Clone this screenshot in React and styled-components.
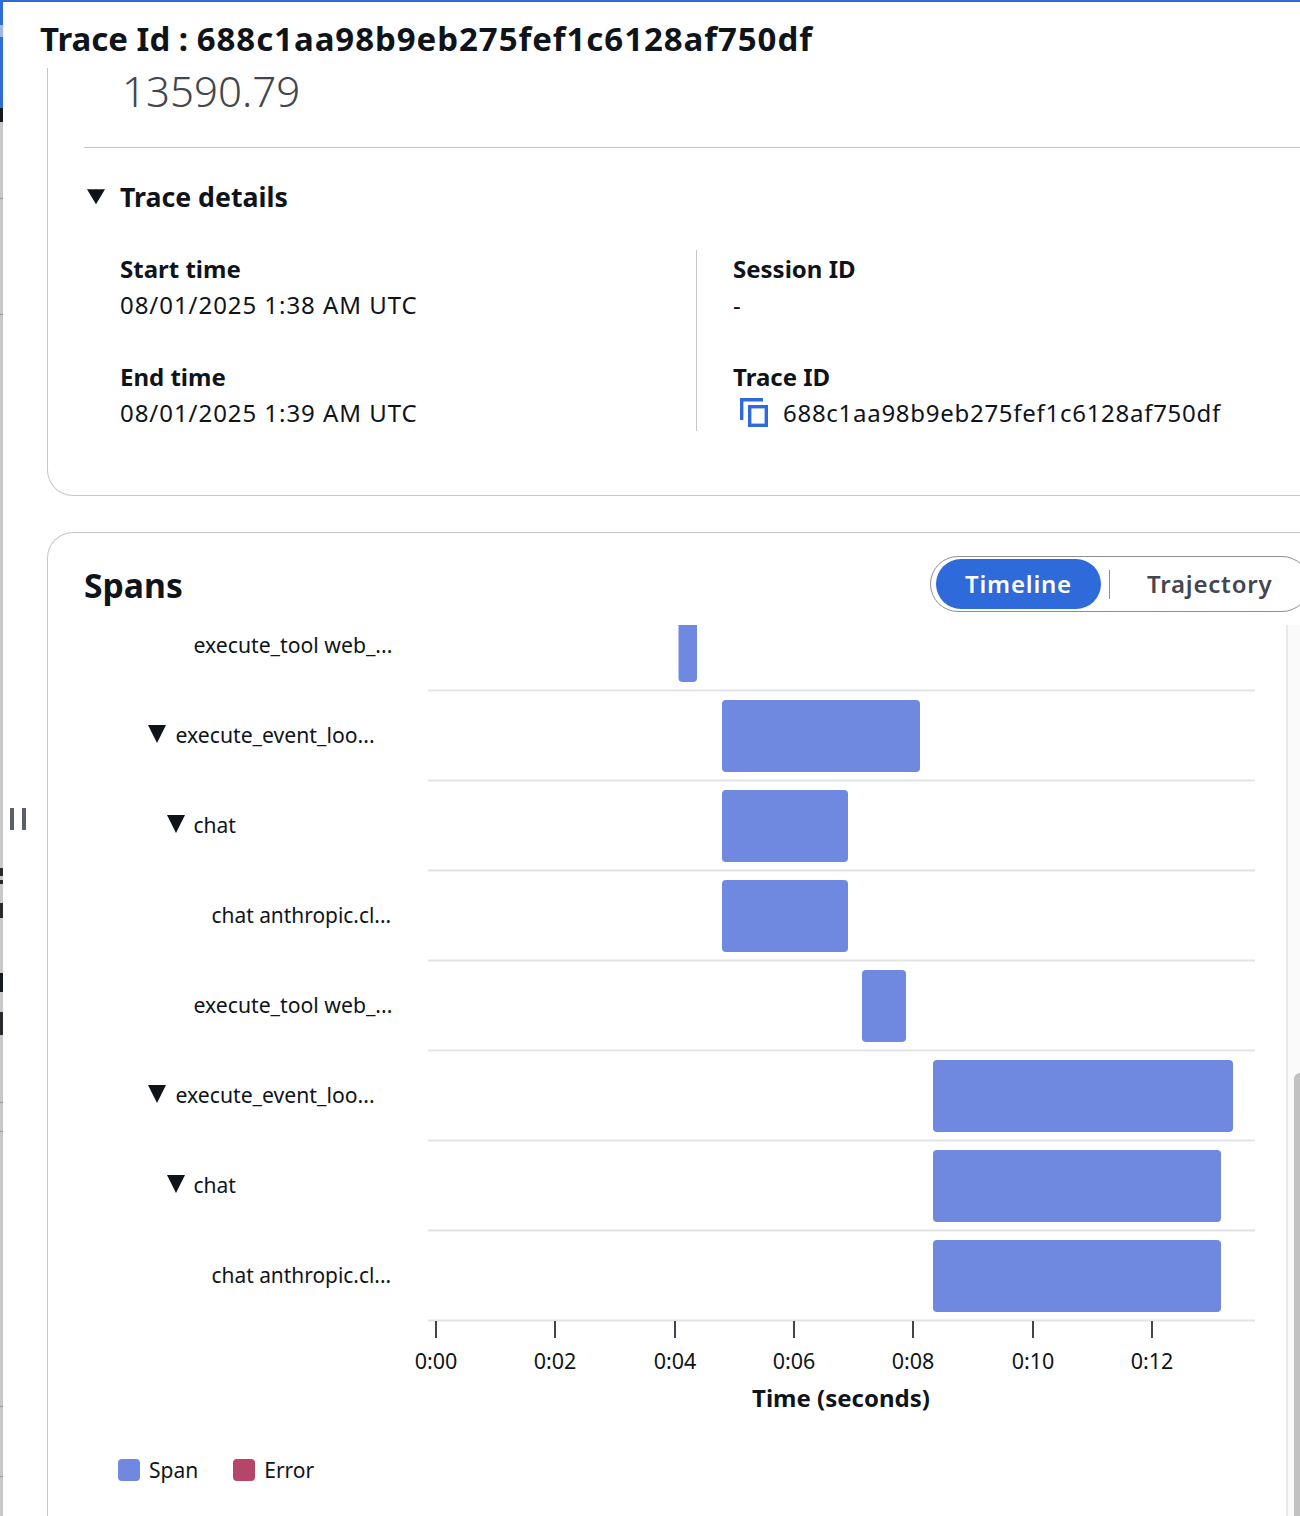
import React from 'react';
import styled, { createGlobalStyle } from 'styled-components';

const GlobalStyle = createGlobalStyle`
  html, body {
    margin: 0;
    padding: 0;
    background: #fff;
  }
  body {
    font-family: "Noto Sans", "Open Sans", sans-serif;
    color: #0f141a;
  }
`;

const ROW_LINES = [690.5, 780.5, 870.5, 960.5, 1050.5, 1140.5, 1230.5, 1320.5];

const BARS = [
  { x: 678.5, y: 600, w: 18.5, h: 82 },
  { x: 722, y: 700, w: 198, h: 72 },
  { x: 722, y: 790, w: 126, h: 72 },
  { x: 722, y: 880, w: 126, h: 72 },
  { x: 862, y: 970, w: 44, h: 72 },
  { x: 933, y: 1060, w: 300, h: 72 },
  { x: 933, y: 1150, w: 288, h: 72 },
  { x: 933, y: 1240, w: 288, h: 72 },
];

const LABELS = [
  { x: 193.5, y: 645, size: 21.2, text: 'execute_tool web_...' },
  { x: 175.5, y: 735, size: 21.2, text: 'execute_event_loo...', caret: 148 },
  { x: 193.5, y: 825, size: 21, text: 'chat', caret: 167 },
  { x: 211.5, y: 915, size: 20.9, text: 'chat anthropic.cl...' },
  { x: 193.5, y: 1005, size: 21.2, text: 'execute_tool web_...' },
  { x: 175.5, y: 1095, size: 21.2, text: 'execute_event_loo...', caret: 148 },
  { x: 193.5, y: 1185, size: 21, text: 'chat', caret: 167 },
  { x: 211.5, y: 1275, size: 20.9, text: 'chat anthropic.cl...' },
];

const TICKS = [
  { x: 436, label: '0:00' },
  { x: 555, label: '0:02' },
  { x: 675, label: '0:04' },
  { x: 794, label: '0:06' },
  { x: 913, label: '0:08' },
  { x: 1033, label: '0:10' },
  { x: 1152, label: '0:12' },
];

// slivers of the page behind the drawer that show in the 3px strip on the left
const EDGE_MARKS = [
  { top: 25, height: 12, color: '#9db8e8' },
  { top: 198, height: 1, color: '#9a9a9a' },
  { top: 314, height: 1, color: '#9a9a9a' },
  { top: 868, height: 8, color: '#2a2a2e' },
  { top: 880, height: 4, color: '#2a2a2e' },
  { top: 903, height: 15, color: '#2a2a2e' },
  { top: 973, height: 19, color: '#16191f' },
  { top: 1012, height: 23, color: '#2a2a2e' },
  { top: 1102, height: 1, color: '#9a9a9a' },
  { top: 1131, height: 1, color: '#9a9a9a' },
  { top: 1406, height: 1, color: '#9a9a9a' },
  { top: 1476, height: 1, color: '#9a9a9a' },
];

const Caret = ({ size = 18 }) => (
  <svg width={size} height={size * 0.85} viewBox="0 0 18 15">
    <path d="M0 0h18L9 15z" fill="#0f141a" />
  </svg>
);

const CopyIcon = () => (
  <svg width="29" height="30" viewBox="0 0 29 30" fill="none" stroke="#2e6ad9" strokeWidth="3.4">
    <path d="M1.7 22V1.7H23" />
    <rect x="9.7" y="8.7" width="16.6" height="18.6" />
  </svg>
);

const SpanChart = () => (
  <ChartSvg viewBox="48 625 1238 810">
    {ROW_LINES.map((y) => (
      <line key={y} x1="428" x2="1255" y1={y} y2={y} stroke="#e3e3e6" strokeWidth="2" />
    ))}
    {BARS.map((b) => (
      <rect key={b.y} x={b.x} y={b.y} width={b.w} height={b.h} rx="4" fill="#6f89e0" />
    ))}
    {LABELS.map((l) => (
      <g key={l.y}>
        {l.caret && <path d={`M${l.caret} ${l.y - 10}h18l-9 18z`} fill="#0f141a" />}
        <text x={l.x} y={l.y + 8} fontSize={l.size} fill="#0f141a">{l.text}</text>
      </g>
    ))}
    {TICKS.map((t) => (
      <g key={t.x}>
        <line x1={t.x} x2={t.x} y1="1321" y2="1338" stroke="#414750" strokeWidth="2" />
        <text x={t.x} y="1369" fontSize="21.5" textAnchor="middle" fill="#0f141a">{t.label}</text>
      </g>
    ))}
    <text x="841" y="1407" fontSize="24" fontWeight="700" textAnchor="middle" fill="#0f141a">Time (seconds)</text>
  </ChartSvg>
);

const App = () => (
  <>
    <GlobalStyle />
    <Page>
      <EdgeStrip>
        <EdgeBlue />
        <EdgeDark />
        {EDGE_MARKS.map((m) => (
          <EdgeMark key={m.top} $top={m.top} $height={m.height} $color={m.color} />
        ))}
      </EdgeStrip>
      <Panel>
        <Header>
          Trace Id : <HeaderId>688c1aa98b9eb275fef1c6128af750df</HeaderId>
        </Header>
        <Body>
          <Gutter>
            <Handle />
          </Gutter>
          <Content>
            <DetailsCard>
              <Metric>13590.79</Metric>
              <Divider />
              <SectionToggle>
                <Caret />
                <SectionTitle>Trace details</SectionTitle>
              </SectionToggle>
              <DetailsGrid>
                <DetailsColumn>
                  <Field>
                    <FieldLabel>Start time</FieldLabel>
                    <FieldValue $tracking={0.95}>08/01/2025 1:38 AM UTC</FieldValue>
                  </Field>
                  <Field>
                    <FieldLabel>End time</FieldLabel>
                    <FieldValue $tracking={0.95}>08/01/2025 1:39 AM UTC</FieldValue>
                  </Field>
                </DetailsColumn>
                <DetailsColumn $second>
                  <Field>
                    <FieldLabel>Session ID</FieldLabel>
                    <FieldValue>-</FieldValue>
                  </Field>
                  <Field>
                    <FieldLabel>Trace ID</FieldLabel>
                    <CopyRow>
                      <CopyIcon />
                      <FieldValue $tracking={0.72}>688c1aa98b9eb275fef1c6128af750df</FieldValue>
                    </CopyRow>
                  </Field>
                </DetailsColumn>
              </DetailsGrid>
            </DetailsCard>

            <SpansCard>
              <SpansHeader>
                <SpansTitle>Spans</SpansTitle>
                <Segmented>
                  <Segment $active>Timeline</Segment>
                  <SegmentRule />
                  <Segment>Trajectory</Segment>
                </Segmented>
              </SpansHeader>
              <ChartArea>
                <ChartColumn>
                  <SpanChart />
                  <Legend>
                    <LegendItem>
                      <Swatch $color="#6f89e0" />
                      Span
                    </LegendItem>
                    <LegendItem>
                      <Swatch $color="#b54569" />
                      Error
                    </LegendItem>
                  </Legend>
                </ChartColumn>
                <ScrollTrack>
                  <ScrollThumb />
                </ScrollTrack>
              </ChartArea>
            </SpansCard>
          </Content>
        </Body>
      </Panel>
    </Page>
  </>
);

const Page = styled.div`
  display: flex;
  width: 1300px;
  height: 1516px;
  overflow: hidden;
`;

const EdgeStrip = styled.div`
  position: relative;
  flex: 0 0 3px;
  display: flex;
  flex-direction: column;
  background: #c8c8c8;
`;

const EdgeBlue = styled.div`
  height: 108px;
  background: #2e6ad9;
`;

const EdgeDark = styled.div`
  height: 14px;
  background: #16191f;
`;

const EdgeMark = styled.div`
  position: absolute;
  left: 0;
  width: 3px;
  top: ${(p) => p.$top}px;
  height: ${(p) => p.$height}px;
  background: ${(p) => p.$color};
`;

const Panel = styled.div`
  flex: 1;
  min-width: 0;
  display: flex;
  flex-direction: column;
  border-top: 2px solid #2e6ad9;
`;

const Header = styled.h1`
  margin: 0;
  height: 66px;
  padding-left: 37px;
  flex: none;
  font-size: 33px;
  line-height: 74px;
  font-weight: 700;
  color: #0f141a;
  white-space: nowrap;
`;

const HeaderId = styled.span`
  letter-spacing: 0.94px;
`;

const Body = styled.div`
  flex: 1;
  min-height: 0;
  display: flex;
`;

const Gutter = styled.div`
  flex: 0 0 44px;
  display: flex;
  justify-content: flex-start;
  padding: 740px 0 0 7px;
  box-sizing: border-box;
`;

const Handle = styled.div`
  width: 16px;
  height: 22px;
  box-sizing: border-box;
  border-left: 4px solid #5a5f68;
  border-right: 4px solid #5a5f68;
`;

const Content = styled.div`
  flex: 1;
  min-width: 0;
  display: flex;
  flex-direction: column;
  gap: 36px;
`;

const DetailsCard = styled.section`
  flex: none;
  height: 428px;
  box-sizing: border-box;
  width: 1300px;
  padding: 0 0 0 36px;
  border: 1px solid #c6c6cd;
  border-top: none;
  border-bottom-left-radius: 26px;
`;

const Metric = styled.div`
  margin-left: 38px;
  height: 79px;
  font-size: 42px;
  line-height: 46px;
  font-weight: 300;
  color: #424650;
`;

const Divider = styled.div`
  height: 1px;
  background: #c6c6cd;
`;

const SectionToggle = styled.div`
  display: flex;
  align-items: center;
  gap: 15px;
  margin: 31px 0 0 3px;
  height: 36px;
`;

const SectionTitle = styled.h2`
  margin: 0;
  font-size: 26.7px;
  line-height: 36px;
  font-weight: 700;
`;

const DetailsGrid = styled.div`
  display: grid;
  grid-template-columns: 576px 1fr;
  margin: 35px 0 0 36px;
`;

const DetailsColumn = styled.div`
  display: flex;
  flex-direction: column;
  gap: 36px;
  height: 180px;
  padding-top: 1px;
  ${(p) => p.$second && 'border-left: 1px solid #c6c6cd; padding-left: 36px;'}
`;

const Field = styled.div`
  display: flex;
  flex-direction: column;
`;

const FieldLabel = styled.div`
  font-size: 24px;
  line-height: 36px;
  font-weight: 700;
`;

const FieldValue = styled.div`
  font-size: 24px;
  line-height: 36px;
  letter-spacing: ${(p) => p.$tracking || 0}px;
`;

const CopyRow = styled.div`
  display: flex;
  align-items: center;
  gap: 14px;
  margin-left: 7px;
`;

const SpansCard = styled.section`
  flex: 1;
  width: 1300px;
  box-sizing: border-box;
  border: 1px solid #c6c6cd;
  border-bottom: none;
  border-radius: 26px 0 0 0;
  display: flex;
  flex-direction: column;
`;

const SpansHeader = styled.div`
  flex: none;
  height: 92px;
  padding: 23px 0 0 36px;
  box-sizing: border-box;
  width: 1252px;
  display: flex;
  justify-content: space-between;
  align-items: flex-start;
`;

const SpansTitle = styled.h2`
  margin: 0;
  font-size: 33.7px;
  line-height: 58px;
  font-weight: 700;
`;

const Segmented = styled.div`
  display: flex;
  align-items: center;
  width: 380px;
  height: 56px;
  flex: none;
  margin-right: -10px;
  padding-left: 5px;
  box-sizing: border-box;
  border: 1px solid #8d8d94;
  border-radius: 28px;
`;

const Segment = styled.div`
  height: 50px;
  width: ${(p) => (p.$active ? '165px' : 'auto')};
  margin-left: ${(p) => (p.$active ? '0' : '37px')};
  text-align: center;
  border-radius: 25px;
  font-size: 24px;
  line-height: 50px;
  font-weight: 600;
  letter-spacing: 0.8px;
  background: ${(p) => (p.$active ? '#2e6ad9' : 'transparent')};
  color: ${(p) => (p.$active ? '#fff' : '#424650')};
`;

const SegmentRule = styled.div`
  width: 1px;
  height: 29px;
  margin-left: 8px;
  background: #8d8d94;
`;

const ChartArea = styled.div`
  flex: 1;
  min-height: 0;
  display: flex;
`;

const ChartColumn = styled.div`
  flex: 0 0 1238px;
  display: flex;
  flex-direction: column;
`;

const ChartSvg = styled.svg`
  display: block;
  width: 1238px;
  height: 810px;
  font-family: "Noto Sans", "Open Sans", sans-serif;
`;

const Legend = styled.div`
  display: flex;
  gap: 35px;
  padding: 20px 0 0 70px;
`;

const LegendItem = styled.div`
  display: flex;
  align-items: center;
  gap: 9px;
  font-size: 21px;
  line-height: 30px;
`;

const Swatch = styled.span`
  width: 22px;
  height: 22px;
  border-radius: 4px;
  background: ${(p) => p.$color};
`;

const ScrollTrack = styled.div`
  flex: 0 0 14px;
  box-sizing: border-box;
  display: flex;
  justify-content: flex-end;
  padding-top: 448px;
  background: #fafafa;
  border-left: 2px solid #e8e8e8;
`;

const ScrollThumb = styled.div`
  width: 6px;
  background: #c2c2c2;
  border-top-left-radius: 8px;
`;

export default App;
